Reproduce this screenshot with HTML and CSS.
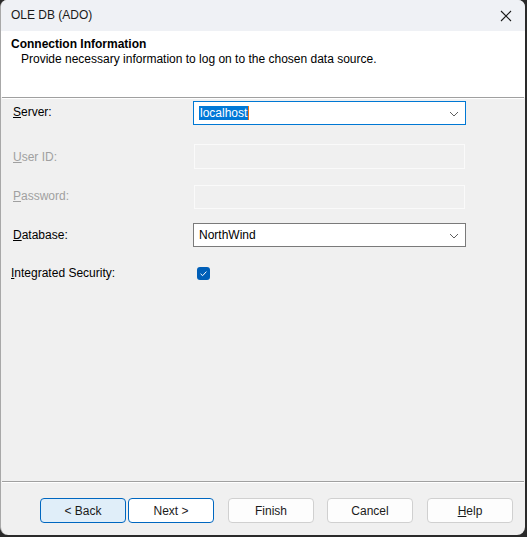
FILE: index.html
```html
<!DOCTYPE html>
<html>
<head>
<meta charset="utf-8">
<link rel="stylesheet" href="styles.css">
</head>
<body>
<div class="window">
  <div class="titlebar">
    <span class="title">OLE DB (ADO)</span>
    <svg class="close" width="12" height="12" viewBox="0 0 12 12"><path d="M1 1 L11 11 M11 1 L1 11" stroke="#1a1a1a" stroke-width="1.1" fill="none"/></svg>
  </div>
  <div class="header">
    <div class="h-title">Connection Information</div>
    <div class="h-sub">Provide necessary information to log on to the chosen data source.</div>
  </div>
  <div class="sep"></div>
  <div class="body">
    <div class="row r-server">
      <label class="lbl"><u>S</u>erver:</label>
      <div class="combo focused">
        <span class="sel">localhost</span><span class="caret"></span>
        <svg class="chev" width="10" height="6" viewBox="0 0 10 6"><path d="M1 1 L5 5 L9 1" stroke="#5f5f5f" stroke-width="1" fill="none"/></svg>
      </div>
    </div>
    <div class="row r-user">
      <label class="lbl disabled"><u>U</u>ser ID:</label>
      <div class="textbox disabled-box"></div>
    </div>
    <div class="row r-pass">
      <label class="lbl disabled lbl-pass"><u>P</u>assword:</label>
      <div class="textbox disabled-box"></div>
    </div>
    <div class="row r-db">
      <label class="lbl"><u>D</u>atabase:</label>
      <div class="combo">
        <span class="val">NorthWind</span>
        <svg class="chev" width="10" height="6" viewBox="0 0 10 6"><path d="M1 1 L5 5 L9 1" stroke="#5f5f5f" stroke-width="1" fill="none"/></svg>
      </div>
    </div>
    <div class="row r-sec">
      <label class="lbl lbl-sec"><u>I</u>ntegrated Security:</label>
      <div class="check"><svg width="13" height="13" viewBox="0 0 13 13"><path d="M3.6 6.8 L5.6 8.7 L9.4 4.6" stroke="#ffffff" stroke-width="1" fill="none"/></svg></div>
    </div>
  </div>
  <div class="sep"></div>
  <div class="footer">
    <div class="btn btn-back">&lt; Back</div>
    <div class="btn btn-next">Next &gt;</div>
    <div class="btn btn-finish">Finish</div>
    <div class="btn btn-cancel">Cancel</div>
    <div class="btn btn-help"><u>H</u>elp</div>
  </div>
</div>
</body>
</html>
```
FILE: styles.css
```css
* { box-sizing: border-box; }
html, body { margin: 0; padding: 0; }
body {
  background: #2a2a2a;
  width: 527px;
  height: 537px;
  overflow: hidden;
  font-family: "Liberation Sans", Arial, sans-serif;
  font-size: 12px;
  color: #000;
}
.window {
  width: 525px;
  height: 535px;
  background: #f0f0f0;
  border-left: 1px solid #a8a8a8;
  border-radius: 7px 7px 8px 8px;
  overflow: hidden;
  display: flex;
  flex-direction: column;
}
.titlebar {
  height: 31px;
  flex: none;
  background: #eff1f5;
  display: flex;
  align-items: center;
  justify-content: space-between;
  padding: 0 13px 2px 10px;
}
.title { font-size: 12px; color: #1a1a1a; }
.close { display: block; margin-top: 2px; }
.header {
  height: 66px;
  flex: none;
  background: #ffffff;
  padding: 6px 0 0 10px;
}
.h-title { font-weight: bold; line-height: 15px; }
.h-sub { padding-left: 10px; line-height: 14px; }
.sep {
  flex: none;
  height: 2px;
  border-top: 1px solid #a0a0a0;
  border-bottom: 1px solid #ffffff;
  margin: 0 1px 0 1px;
}
.body {
  flex: 1;
  padding: 2px 0 0 0;
  display: flex;
  flex-direction: column;
}
.row { display: flex; align-items: center; }
.lbl {
  width: 192px;
  flex: none;
  padding-left: 12px;
  color: #000;
}
.lbl.disabled { color: #a0a0a0; }
.lbl-pass { margin-top: -3px; }
.lbl-sec { padding-left: 10px; }
.r-server .lbl { margin-top: -2px; }
.r-user { margin-top: 19px; }
.r-pass { margin-top: 16px; }
.r-db { margin-top: 14px; }
.r-sec { margin-top: 19px; }
.combo {
  width: 273px;
  height: 24px;
  border: 1px solid #7a7a7a;
  background: #fff;
  display: flex;
  align-items: center;
  position: relative;
  padding-left: 5px;
}
.combo.focused { border-color: #0078d4; }
.sel {
  background: #0078d7;
  color: #fff;
  height: 14px;
  line-height: 14px;
  padding: 0 1px;
}
.caret {
  width: 1px;
  height: 14px;
  background: #f07010;
}
.chev {
  position: absolute;
  right: 6px;
  top: 9px;
}
.textbox {
  width: 271px;
  margin-left: 1px;
}
.r-user .textbox { height: 25px; }
.r-pass .textbox { height: 24px; }
.disabled-box {
  border: 1px solid #fafafa;
  background: #f0f0f0;
}
.check {
  width: 13px;
  height: 13px;
  margin-left: 4px;
  background: #005fb8;
  border-radius: 3px;
}
.check svg { display: block; }
.footer {
  height: 52px;
  flex: none;
  display: flex;
  padding: 15px 0 0 39px;
}
.btn {
  flex: none;
  width: 86px;
  height: 25px;
  border: 1px solid #d0d0d0;
  border-radius: 4px;
  background: #fdfdfd;
  display: flex;
  align-items: center;
  justify-content: center;
  margin-right: 14px;
  color: #1a1a1a;
}
.btn-back {
  background: #e0eef9;
  border-color: #0067c0;
  margin-right: 2px;
}
.btn-next {
  border-color: #0067c0;
  background: #fff;
}
.btn-finish { margin-right: 13px; }
.btn-cancel { margin-right: 14px; }
.btn-help { margin-right: 0; }
```
